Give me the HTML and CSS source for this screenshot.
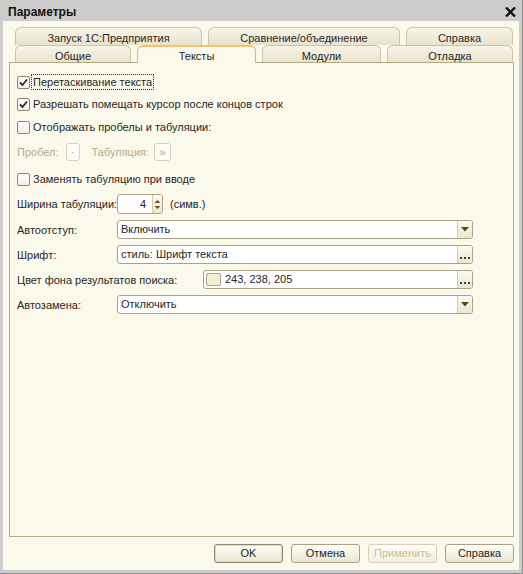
FILE: index.html
```html
<!DOCTYPE html>
<html lang="ru">
<head>
<meta charset="utf-8">
<title>Параметры</title>
<link rel="stylesheet" href="styles.css">
</head>
<body>
<div class="frame">
  <div class="titlebar">
    <span class="title">Параметры</span>
    <svg class="close" width="11" height="10" viewBox="0 0 11 10"><path d="M1 0.5L10 9.5M10 0.5L1 9.5" stroke="#111" stroke-width="2.3"/></svg>
  </div>
  <div class="client">
    <div class="tabs">
      <div class="tabrow back">
        <div class="tab w187">Запуск 1С:Предприятия</div>
        <div class="tab w192">Сравнение/объединение</div>
        <div class="tab w107">Справка</div>
      </div>
      <div class="tabrow front">
        <div class="tab w116">Общие</div>
        <div class="tab w119 active">Тексты</div>
        <div class="tab w119">Модули</div>
        <div class="tab w126">Отладка</div>
      </div>
    </div>
    <div class="panel">
      <div class="form">
        <div class="cb-row r1">
          <span class="cb checked"><svg width="11" height="11" viewBox="0 0 11 11"><path d="M2 5.5L4.5 8L9 2.5" fill="none" stroke="#2b2b2b" stroke-width="1.8"/></svg></span>
          <span class="cb-label focus">Перетаскивание текста</span>
        </div>
        <div class="cb-row r2">
          <span class="cb checked"><svg width="11" height="11" viewBox="0 0 11 11"><path d="M2 5.5L4.5 8L9 2.5" fill="none" stroke="#2b2b2b" stroke-width="1.8"/></svg></span>
          <span class="cb-label">Разрешать помещать курсор после концов строк</span>
        </div>
        <div class="cb-row r3">
          <span class="cb"></span>
          <span class="cb-label">Отображать пробелы и табуляции:</span>
        </div>
        <div class="ws-row">
          <span class="dis">Пробел:</span>
          <span class="wsbox sp">·</span>
          <span class="dis tablbl">Табуляция:</span>
          <span class="wsbox tb">»</span>
        </div>
        <div class="cb-row r4">
          <span class="cb"></span>
          <span class="cb-label">Заменять табуляцию при вводе</span>
        </div>
        <div class="spin-row">
          <span class="lbl">Ширина табуляции:</span>
          <span class="spin">
            <span class="spin-val">4</span>
            <span class="spin-btn">
              <svg width="7" height="13" viewBox="0 0 7 13"><path d="M0.5 5L3.5 2L6.5 5Z" fill="#6a5820"/><path d="M0.5 8L3.5 11L6.5 8Z" fill="#6a5820"/></svg>
            </span>
          </span>
          <span class="unit">(симв.)</span>
        </div>
        <div class="frow first">
          <span class="lbl">Автоотступ:</span>
          <span class="field"><span class="val">Включить</span><span class="fbtn"><svg width="8" height="5" viewBox="0 0 8 5"><path d="M0 0H8L4 4.5Z" fill="#5a4814"/></svg></span></span>
        </div>
        <div class="frow">
          <span class="lbl">Шрифт:</span>
          <span class="field"><span class="val">стиль: Шрифт текста</span><span class="fbtn dots"><i></i><i></i><i></i></span></span>
        </div>
        <div class="frow">
          <span class="lbl wide">Цвет фона результатов поиска:</span>
          <span class="field"><span class="swatch"></span><span class="val">243, 238, 205</span><span class="fbtn dots"><i></i><i></i><i></i></span></span>
        </div>
        <div class="frow">
          <span class="lbl">Автозамена:</span>
          <span class="field"><span class="val">Отключить</span><span class="fbtn"><svg width="8" height="5" viewBox="0 0 8 5"><path d="M0 0H8L4 4.5Z" fill="#5a4814"/></svg></span></span>
        </div>
      </div>
    </div>
    <div class="buttons">
      <span class="button default">OK</span>
      <span class="button">Отмена</span>
      <span class="button disabled">Применить</span>
      <span class="button">Справка</span>
    </div>
  </div>
</div>
</body>
</html>
```
FILE: styles.css
```css
* { box-sizing: border-box; }
html, body { margin: 0; padding: 0; }
body {
  width: 523px;
  height: 574px;
  overflow: hidden;
  font-family: "Liberation Sans", Arial, sans-serif;
  font-size: 11px;
  color: #262626;
  background: #fff;
}
.frame {
  width: 523px;
  height: 574px;
  background: #cccccc;
  border-right: 1px solid #8e8e8e;
  border-bottom: 1px solid #8e8e8e;
  padding: 0 3px 3px 3px;
  display: flex;
  flex-direction: column;
}
.titlebar {
  flex: none;
  height: 21px;
  display: flex;
  align-items: center;
  justify-content: space-between;
  padding: 3px 3px 0 5px;
}
.title {
  font-weight: bold;
  font-size: 12px;
  color: #111;
}
.close { display: block; }
.client {
  flex: 1;
  background: #fbf9ec;
  display: flex;
  flex-direction: column;
  padding: 6px 5px 7px 6px;
}
.tabs { flex: none; padding-left: 6px; }
.tabrow { display: flex; gap: 6px; }
.back { height: 18px; }
.front { height: 17px; }
.tab {
  flex: none;
  border: 1px solid #cbc4a7;
  border-bottom: none;
  border-radius: 6px 6px 0 0;
  background: linear-gradient(#f8f5e9, #e9e3cc);
  text-align: center;
  white-space: nowrap;
}
.back .tab { line-height: 15px; padding-top: 3px; }
.front .tab { line-height: 14px; padding-top: 3px; }
.w187 { width: 187px; }
.w192 { width: 192px; }
.w107 { width: 107px; }
.w116 { width: 116px; }
.w119 { width: 119px; }
.w126 { width: 126px; }
.front .tab.active {
  position: relative;
  z-index: 1;
  height: 18px;
  align-self: flex-start;
  background: #fbf9ec;
  border-color: #c6bd9b;
  border-top: 2px solid #f0c46c;
  padding-top: 2px;
  line-height: 14px;
}
.panel {
  flex: 1;
  border: 1px solid #b4aa84;
  background: #fbf9ec;
  padding: 11px 8px 0 7px;
}
.form { width: 456px; display: flex; flex-direction: column; }
.cb-row { display: flex; align-items: center; height: 16px; }
.r2 { margin-top: 6px; }
.r3 { margin-top: 7px; }
.r4 { margin-top: 10px; }
.cb {
  width: 13px;
  height: 13px;
  border: 1px solid #8d8674;
  border-radius: 2px;
  background: linear-gradient(#ffffff, #f1eee4);
  display: flex;
  align-items: center;
  justify-content: center;
  flex: none;
}
.cb svg { display: block; }
.cb-label {
  margin-left: 1px;
  border: 1px dotted transparent;
  padding: 0 1px 0 1px;
  height: 16px;
  line-height: 14px;
  white-space: nowrap;
}
.cb-label.focus { border-color: #333; }
.ws-row {
  display: flex;
  align-items: center;
  height: 18px;
  margin-top: 8px;
}
.dis { color: #b2a98e; }
.wsbox {
  height: 18px;
  border: 1px solid #d9d2bb;
  border-radius: 3px;
  background: #fdfcf5;
  color: #a9a189;
  display: flex;
  align-items: center;
  justify-content: center;
}
.wsbox.sp { width: 14px; margin-left: 7px; }
.wsbox.tb { width: 17px; margin-left: 5px; }
.tablbl { margin-left: 12px; }
.spin-row {
  display: flex;
  align-items: center;
  height: 20px;
  margin-top: 7px;
}
.lbl { width: 100px; flex: none; white-space: nowrap; }
.lbl.wide { width: 186px; }
.spin {
  width: 46px;
  height: 20px;
  border: 1px solid #aaa287;
  border-radius: 3px;
  background: #fff;
  display: flex;
}
.spin-val { flex: 1; text-align: right; padding-right: 6px; line-height: 18px; }
.spin-btn {
  width: 10px;
  border-left: 1px solid #cfc8ad;
  background: linear-gradient(#fcfaf1, #ebe6d2);
  border-radius: 0 2px 2px 0;
  display: flex;
  align-items: center;
  justify-content: center;
}
.spin-btn svg { display: block; }
.unit { margin-left: 7px; }
.frow {
  display: flex;
  align-items: center;
  height: 19px;
  margin-top: 6px;
}
.field {
  flex: 1;
  height: 19px;
  border: 1px solid #aaa287;
  border-radius: 3px;
  background: #fff;
  display: flex;
  align-items: stretch;
}
.field .val { flex: 1; padding-left: 3px; line-height: 17px; white-space: nowrap; }
.fbtn {
  width: 15px;
  flex: none;
  border-left: 1px solid #cfc8ad;
  background: linear-gradient(#fcfaf2, #ebe6d2);
  border-radius: 0 2px 2px 0;
  display: flex;
  align-items: center;
  justify-content: center;
}
.fbtn svg { display: block; }
.fbtn.dots {
  align-items: flex-end;
  gap: 2px;
  padding-bottom: 4px;
}
.fbtn.dots i {
  display: block;
  width: 2px;
  height: 2px;
  background: #4b3f12;
}
.swatch {
  width: 15px;
  height: 13px;
  margin: 2px 0 0 2px;
  border: 1px solid #a8a18a;
  border-radius: 2px;
  background: rgb(243, 238, 205);
  flex: none;
}
.swatch + .val { padding-left: 4px; }
.buttons {
  flex: none;
  height: 19px;
  margin-top: 7px;
  display: flex;
  justify-content: flex-end;
  gap: 8px;
}
.button {
  width: 69px;
  height: 19px;
  border: 1px solid #a9a185;
  border-radius: 3px;
  background: linear-gradient(#fefdf8, #ebe6d1);
  text-align: center;
  line-height: 17px;
}
.button.default {
  border-color: #8f876c;
  box-shadow: inset 0 0 0 1px #ddd6bb;
}
.button.disabled {
  color: #c9bf9f;
  border-color: #d8d1b8;
  background: linear-gradient(#fefdf8, #f2eee0);
}
```
